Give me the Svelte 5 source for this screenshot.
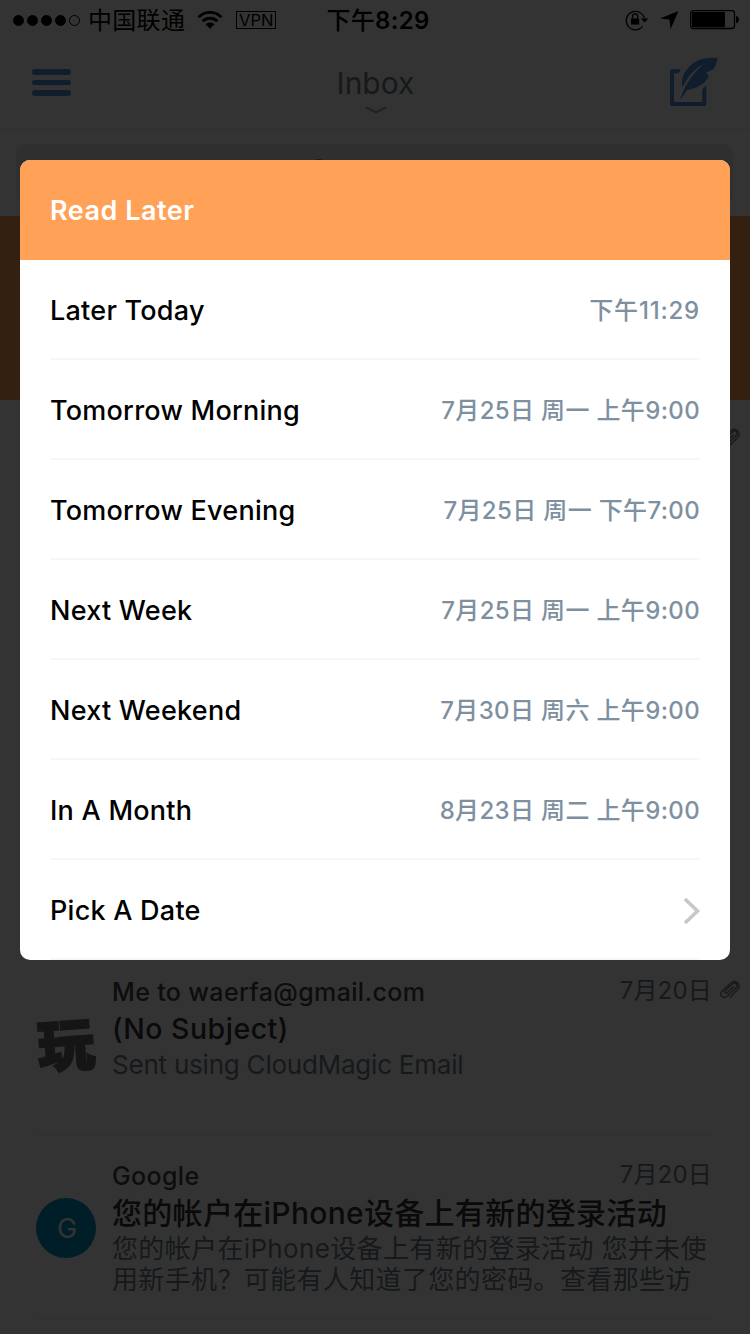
<script lang="ts">
  const options = [
    { label: "Later Today", time: "下午11:29" },
    { label: "Tomorrow Morning", time: "7月25日 周一 上午9:00" },
    { label: "Tomorrow Evening", time: "7月25日 周一 下午7:00" },
    { label: "Next Week", time: "7月25日 周一 上午9:00" },
    { label: "Next Weekend", time: "7月30日 周六 上午9:00" },
    { label: "In A Month", time: "8月23日 周二 上午9:00" },
    { label: "Pick A Date", time: "" },
  ];

  const signal = [true, true, true, true, false];
</script>

{#snippet clip()}
  <svg class="clip" width="22" height="20" viewBox="0 0 22 20">
    <path
      d="M14.6 6.8L8.2 12.8c-1.5 1.4-3.5-.7-2-2.1L13.4 4c3-2.7 6.3.9 3.5 3.7L8.3 16.2c-4 3.6-8.8-1.3-5-5.2L11.5 3.2c5-4.7 11.7 1.2 7 6.3L11.4 17"
      fill="none"
      stroke="currentColor"
      stroke-width="1.4"
      stroke-linecap="round"
    />
  </svg>
{/snippet}

<div class="screen">
  <div class="status">
    <div class="left">
      <div class="signal">
        {#each signal as on}
          <i class:on></i>
        {/each}
      </div>
      <span class="carrier">中国联通</span>
      <svg class="wifi" width="26" height="20" viewBox="0 0 26 20">
        <g fill="none" stroke="#000" stroke-width="2.9">
          <path d="M1.6 7.2C8 .8 18 .8 24.4 7.2" />
          <path d="M5.6 11.3c4.2-4 10.6-4 14.8 0" />
        </g>
        <path d="M8.6 14.2c2.5-2.3 6.3-2.3 8.8 0L13 18.8z" />
      </svg>
      <span class="vpn">VPN</span>
    </div>
    <div class="clock">下午<b>8:29</b></div>
    <div class="right">
      <svg width="24" height="22" viewBox="0 0 24 22">
        <path d="M17.6 17.4A9.2 9.2 0 1 1 19.4 9.4" fill="none" stroke="#000" stroke-width="1.3" />
        <path d="M15.8 9.4h7.6l-3.8 4.2z" />
        <path d="M6 9.4h8.2v6.2H6z" />
        <path d="M7.5 9.5V7.4a2.6 2.6 0 0 1 5.2 0v2.1" fill="none" stroke="#000" stroke-width="1.3" />
      </svg>
      <svg class="arrow" width="19" height="18" viewBox="0 0 19 18">
        <path d="M18.5 0L10.6 18 9.4 8.6 0 7.6z" />
      </svg>
      <svg class="battery" width="50" height="20" viewBox="0 0 50 20">
        <rect x=".7" y=".7" width="43.8" height="17.8" rx="2.8" fill="none" stroke="#000" stroke-width="1.3" />
        <rect x="2" y="2" width="33" height="15.2" rx="1" />
        <path d="M46 6c4 .6 4 6.6 0 7.2z" />
      </svg>
    </div>
  </div>

  <div class="nav">
    <div class="menu"><i></i><i></i><i></i></div>
    <div class="title">
      <span>Inbox</span>
      <svg width="22" height="9" viewBox="0 0 22 9">
        <path d="M1 1.2l10 5.2 10-5.2" fill="none" stroke="#a4a8ab" stroke-width="2.2" />
      </svg>
    </div>
    <svg class="compose" width="49" height="50" viewBox="0 0 49 50">
      <path d="M12 12.3L9.3 16.3H5V45h28.3V32.3l4-3.8V47a2 2 0 0 1-2 2H3a2 2 0 0 1-2-2V14.300a2 2 0 0 1 2-2z" />
      <path d="M48.7 1C41 .2 34.500 .8 29 3.500 22 7 16 13 13.800 20c-1 3.500-1 7-.3 10.500C18.500 20 25 12.500 35 6.500 27 13.500 20.500 21.500 15.700 30.800L11 42l1.300-.5 6-8.500C27 31.500 33.500 28 37 23.500c1.200-1.400 2.200-2.800 3-4.500l-3-3.200 7.500-3.600C46.500 9 47.800 5 48.700 1z" />
    </svg>
  </div>

  <div class="search-bar">
    <div class="search">
      <svg width="24" height="24" viewBox="0 0 24 24">
        <circle cx="10" cy="10" r="8" fill="none" stroke="#777" stroke-width="2" />
        <path d="M16 16l7 7" stroke="#777" stroke-width="2" />
      </svg>
    </div>
  </div>

  <div class="swiped"></div>
  <div class="mail first">{@render clip()}</div>
  <div class="mail"></div>
  <div class="mail"></div>

  <div class="mail">
    <div class="logo">玩</div>
    <div class="body">
      <div class="top">
        <span class="from">Me to waerfa@gmail.com</span>
        <span class="date">7月20日</span>
      </div>
      <div class="subject none">(No Subject)</div>
      <div class="preview sent">Sent using CloudMagic Email</div>
    </div>
    {@render clip()}
  </div>

  <div class="mail">
    <div class="avatar">G</div>
    <div class="body">
      <div class="top">
        <span class="from">Google</span>
        <span class="date">7月20日</span>
      </div>
      <div class="subject">您的帐户在iPhone设备上有新的登录活动</div>
      <div class="preview">您的帐户在iPhone设备上有新的登录活动 您并未使<br />用新手机？可能有人知道了您的密码。查看那些访</div>
    </div>
  </div>

  <div class="overlay">
    <div class="dialog">
      <div class="head">Read Later</div>
      <ul>
        {#each options as option, i}
          <li>
            <span class="label">{option.label}</span>
            {#if option.time}
              <span class="time" class:today={i === 0}>{option.time}</span>
            {:else}
              <svg width="18" height="28" viewBox="0 0 18 28">
                <path d="M2 2l12.5 12L2 26" fill="none" stroke="#c7c7cc" stroke-width="3.6" />
              </svg>
            {/if}
          </li>
        {/each}
      </ul>
    </div>
  </div>
</div>

<style>
  :global(body) {
    background: #fff;
  }

  .screen {
    position: relative;
    width: 750px;
    height: 1334px;
    overflow: hidden;
    background: #fff;
    font-family: Inter, "Noto Sans CJK SC", sans-serif;
  }

  .status {
    display: grid;
    grid-template-columns: 1fr auto 1fr;
    align-items: center;
    height: 40px;
    padding: 0 10px 0 13px;
  }

  .left,
  .right,
  .signal {
    display: flex;
    align-items: center;
  }

  .right {
    justify-content: flex-end;
  }

  .signal {
    gap: 3px;
  }

  .signal i {
    box-sizing: border-box;
    width: 11px;
    height: 11px;
    border: 1px solid #000;
    border-radius: 50%;
  }

  .signal i.on {
    background: #000;
  }

  .carrier {
    margin-left: 8px;
    padding-top: 2px;
    font-size: 24px;
    line-height: 38px;
    letter-spacing: 0.3px;
  }

  .wifi {
    margin-left: 12px;
  }

  .vpn {
    box-sizing: border-box;
    width: 40px;
    height: 18px;
    margin-left: 13px;
    border: 1px solid #000;
    font-size: 16.5px;
    line-height: 16px;
    text-align: center;
  }

  .clock {
    padding: 2px 0 0 3px;
    font-size: 24px;
    font-weight: 500;
    line-height: 38px;
    letter-spacing: 0.3px;
  }

  .clock b {
    font-weight: 600;
  }

  .arrow,
  .battery {
    margin-left: 11px;
  }

  .nav {
    display: flex;
    justify-content: space-between;
    box-sizing: border-box;
    height: 90px;
    padding: 0 32px;
    border-bottom: 2px solid #f2f2f2;
  }

  .menu {
    display: flex;
    flex-direction: column;
    gap: 5px;
    width: 39px;
    padding-top: 29px;
  }

  .menu i {
    height: 5.5px;
    border-radius: 3px;
    background: #4a90e2;
  }

  .title {
    display: flex;
    flex-direction: column;
    align-items: center;
    margin-left: 11px;
    padding-top: 23px;
    font-size: 30px;
    line-height: 40px;
    color: #6f7f8c;
  }

  .title svg {
    margin-top: 3px;
  }

  .compose {
    margin-top: 17px;
    fill: #4a90e2;
  }

  .search-bar {
    box-sizing: border-box;
    height: 86px;
    padding: 14px 17px 12px 16px;
  }

  .search {
    box-sizing: border-box;
    height: 60px;
    padding: 14px 0 0 293px;
    border-radius: 10px;
    background: #ebebeb;
  }

  .swiped {
    height: 184px;
    background: #ffa157;
  }

  .mail {
    display: flex;
    position: relative;
    box-sizing: border-box;
    height: 184px;
    padding: 24px 9px 0 36px;
  }

  .mail::after {
    content: "";
    position: absolute;
    right: 37px;
    bottom: 0;
    left: 36px;
    height: 2px;
    background: #f2f2f2;
  }

  .first {
    justify-content: flex-end;
  }

  .clip {
    flex: none;
    margin: 4px 0 0 7px;
    color: #6f7f8c;
  }

  .logo,
  .avatar {
    flex: none;
    width: 60px;
    height: 60px;
    margin: 38px 16px 0 0;
    border-radius: 50%;
    line-height: 60px;
    text-align: center;
  }

  .logo {
    color: #6a6a6a;
    font-family: "Noto Sans CJK SC", sans-serif;
    font-size: 57px;
    font-weight: 900;
    line-height: 54px;
    -webkit-text-stroke: 2px #6a6a6a;
    transform: rotate(-4deg);
  }

  .avatar {
    background: #0096c8;
    color: #fff;
    font-size: 27px;
    line-height: 62px;
    text-indent: 2px;
  }

  .body {
    width: 600px;
  }

  .top {
    display: flex;
    justify-content: space-between;
    height: 34px;
    font-size: 25px;
    line-height: 32px;
  }

  .from {
    color: #444;
    font-weight: 500;
    letter-spacing: 0.35px;
  }

  .date {
    color: #6f7f8c;
    font-size: 24px;
    line-height: 30px;
    letter-spacing: 0.2px;
  }

  .subject {
    height: 38px;
    padding-top: 1px;
    box-sizing: border-box;
    color: #333;
    font-size: 30px;
    font-weight: 500;
    line-height: 36px;
    letter-spacing: 0.3px;
    white-space: nowrap;
  }

  .none {
    font-size: 28.5px;
    letter-spacing: 0.5px;
  }

  .preview {
    padding-top: 1px;
    color: #6f7f8c;
    font-size: 26px;
    line-height: 31px;
    letter-spacing: 0.35px;
    white-space: nowrap;
  }

  .sent {
    letter-spacing: -0.22px;
  }

  .overlay {
    position: absolute;
    inset: 0;
    padding: 160px 20px 0;
    background: rgba(0, 0, 0, 0.8);
  }

  .dialog {
    height: 800px;
    border-radius: 10px;
    overflow: hidden;
    background: #fff;
  }

  .head {
    height: 100px;
    padding-left: 30px;
    background: #ffa157;
    color: #fff;
    font-size: 27px;
    font-weight: 600;
    line-height: 102px;
    letter-spacing: 0.5px;
  }

  ul {
    margin: 0;
    padding: 0 30px;
    list-style: none;
  }

  li {
    display: flex;
    align-items: center;
    justify-content: space-between;
    box-sizing: border-box;
    height: 100px;
    padding-top: 2px;
    border-bottom: 2px solid #f7f7f7;
  }

  li svg {
    margin: 2px -1px 0 0;
  }

  .label {
    font-size: 27px;
    font-weight: 500;
    letter-spacing: 0.25px;
  }

  .time {
    padding-bottom: 4px;
    color: #7e90a0;
    font-size: 24px;
    font-weight: 500;
    letter-spacing: 0.35px;
  }

  .today {
    letter-spacing: 0.8px;
  }
</style>
